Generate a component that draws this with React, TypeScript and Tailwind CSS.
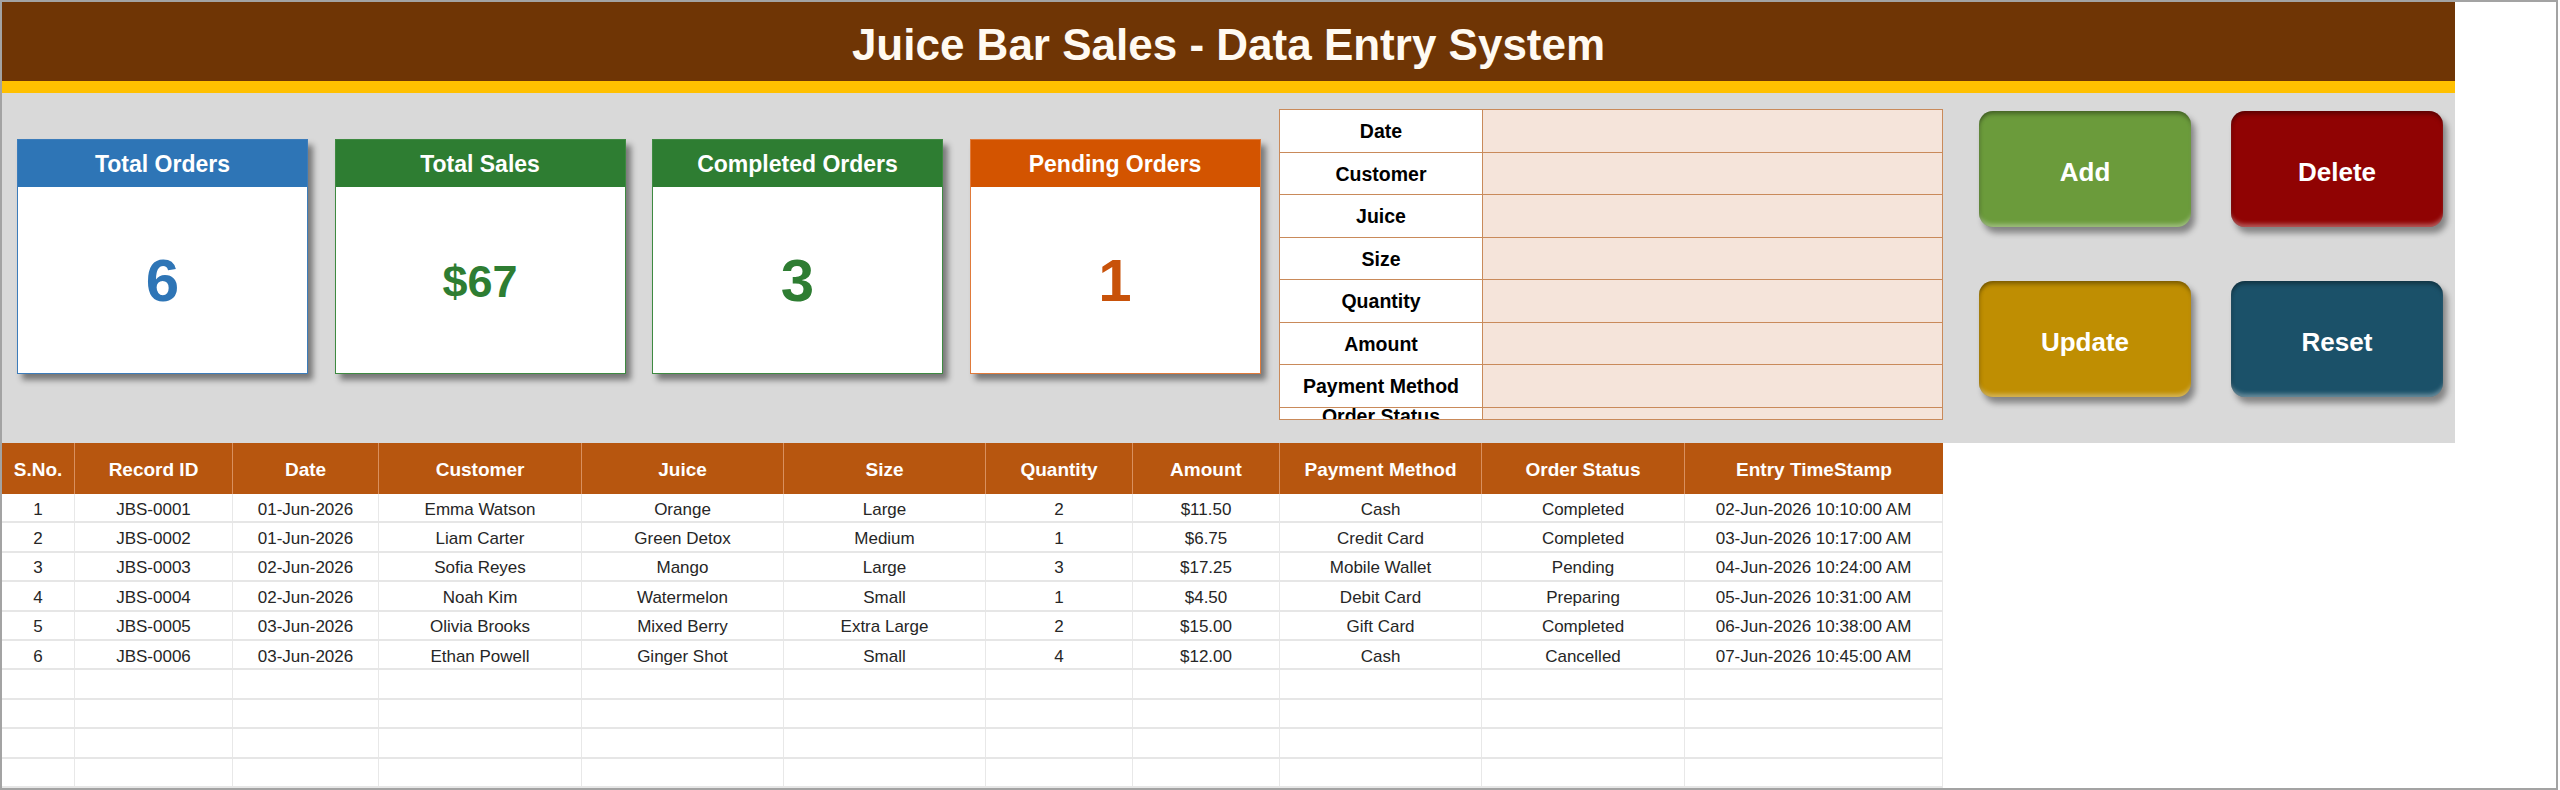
import React from "react";

const F = { fontFamily: '"Liberation Sans", Arial, sans-serif' };

const cards = [
  { title: "Total Orders", value: "6", head: "bg-[#2E75B6]", border: "border-[#3C7CBA]", text: "text-[#2E75B6] text-[60px]" },
  { title: "Total Sales", value: "$67", head: "bg-[#2E7D32]", border: "border-[#3E8A41]", text: "text-[#2E7D32] text-[45px]" },
  { title: "Completed Orders", value: "3", head: "bg-[#2E7D32]", border: "border-[#3E8A41]", text: "text-[#2E7D32] text-[60px]" },
  { title: "Pending Orders", value: "1", head: "bg-[#D35400]", border: "border-[#E07A3A]", text: "text-[#C8520A] text-[60px]" },
];

const labels = ["Date", "Customer", "Juice", "Size", "Quantity", "Amount", "Payment Method"];

const buttons = [
  { label: "Add", cls: "bg-[#6B9B3B]" },
  { label: "Delete", cls: "bg-[#900303]" },
  { label: "Update", cls: "bg-[#BF8E02]" },
  { label: "Reset", cls: "bg-[#1B5169]" },
];

const headers = [
  "S.No.", "Record ID", "Date", "Customer", "Juice", "Size", "Quantity", "Amount", "Payment Method", "Order Status", "Entry TimeStamp",
];

const rows = [
  ["1", "JBS-0001", "01-Jun-2026", "Emma Watson", "Orange", "Large", "2", "$11.50", "Cash", "Completed", "02-Jun-2026 10:10:00 AM"],
  ["2", "JBS-0002", "01-Jun-2026", "Liam Carter", "Green Detox", "Medium", "1", "$6.75", "Credit Card", "Completed", "03-Jun-2026 10:17:00 AM"],
  ["3", "JBS-0003", "02-Jun-2026", "Sofia Reyes", "Mango", "Large", "3", "$17.25", "Mobile Wallet", "Pending", "04-Jun-2026 10:24:00 AM"],
  ["4", "JBS-0004", "02-Jun-2026", "Noah Kim", "Watermelon", "Small", "1", "$4.50", "Debit Card", "Preparing", "05-Jun-2026 10:31:00 AM"],
  ["5", "JBS-0005", "03-Jun-2026", "Olivia Brooks", "Mixed Berry", "Extra Large", "2", "$15.00", "Gift Card", "Completed", "06-Jun-2026 10:38:00 AM"],
  ["6", "JBS-0006", "03-Jun-2026", "Ethan Powell", "Ginger Shot", "Small", "4", "$12.00", "Cash", "Cancelled", "07-Jun-2026 10:45:00 AM"],
];
const emptyRows = Array.from({ length: 4 }, () => Array.from({ length: 11 }, () => ""));

const gridCols = "grid grid-cols-[73px_158px_146px_203px_202px_202px_147px_147px_202px_203px_258px]";

export default function App() {
  return (
    <div className="w-[2558px] h-[790px] bg-white border-2 border-[#a3a3a3] overflow-hidden" style={F}>
      <div className="w-[2453px] flex flex-col">
        <div className="h-[79px] bg-[#6F3505] flex items-center justify-center">
          <h1 className="text-[44px] font-bold text-[#FFFAF2] leading-none pt-[6px]">Juice Bar Sales - Data Entry System</h1>
        </div>
        <div className="h-[12px] bg-[#FFC000]" />
        <div className="h-[350px] bg-[#D9D9D9] flex items-start pl-[15px]">
          <div className="flex gap-[26.5px] mt-[46px]">
            {cards.map((c) => (
              <div
                key={c.title}
                className={`w-[291px] h-[235px] bg-white border ${c.border} flex flex-col shadow-[5px_6px_6px_rgba(0,0,0,0.45)]`}
              >
                <div className={`h-[47px] ${c.head} flex items-center justify-center text-white text-[23px] font-bold pt-[2px]`}>
                  {c.title}
                </div>
                <div className={`flex-1 flex items-center justify-center font-bold ${c.text} leading-none pt-[2px]`}>{c.value}</div>
              </div>
            ))}
          </div>
          <div className="ml-[18.5px] mt-[16px] w-[664px] border-[1.5px] border-[#C98A5A] flex flex-col">
            {labels.map((l) => (
              <div key={l} className="h-[42.5px] flex border-b-[1.5px] border-[#C98A5A]">
                <div className="w-[203px] bg-white border-r-[1.5px] border-[#C98A5A] flex items-center justify-center text-[19.5px] font-bold text-black pt-[2px]">
                  {l}
                </div>
                <div className="flex-1 bg-[#F5E4DA]" />
              </div>
            ))}
            <div className="h-[11px] flex overflow-hidden">
              <div className="w-[203px] bg-white border-r-[1.5px] border-[#C98A5A] flex justify-center text-[19.5px] font-bold text-black leading-none overflow-hidden">
                <span className="-mt-[1px]">Order Status</span>
              </div>
              <div className="flex-1 bg-[#F5E4DA]" />
            </div>
          </div>
          <div className="ml-[36px] mt-[18px] grid grid-cols-[212px_212px] gap-x-[40px] gap-y-[54px]">
            {buttons.map((b) => (
              <div
                key={b.label}
                className={`h-[116px] rounded-[14px] ${b.cls} flex items-center justify-center text-white text-[26px] font-bold pt-[6px] shadow-[inset_0_5px_4px_-2px_rgba(0,0,0,0.35),inset_0_-5px_4px_-2px_rgba(255,255,255,0.35),inset_4px_0_4px_-3px_rgba(0,0,0,0.2),4px_6px_6px_rgba(0,0,0,0.4)]`}
              >
                {b.label}
              </div>
            ))}
          </div>
        </div>
        <div className="w-[1941px]">
          <div className={`${gridCols} h-[51px] bg-[#B7560F]`}>
            {headers.map((h, i) => (
              <div
                key={h}
                className={`flex items-center justify-center text-white font-bold text-[19px] pt-[4px] ${i < headers.length - 1 ? "border-r border-[#D9905E]" : ""}`}
              >
                {h}
              </div>
            ))}
          </div>
          {[...rows, ...emptyRows].map((r, ri) => (
            <div key={ri} className={`${gridCols} h-[29.4px] border-b-2 border-[#E6E6E6]`}>
              {r.map((v, ci) => (
                <div
                  key={ci}
                  className="flex items-center justify-center text-[17px] text-[#262626] border-r border-[#E8E8E8] leading-none pt-[3px]"
                >
                  {v}
                </div>
              ))}
            </div>
          ))}
        </div>
      </div>
    </div>
  );
}
